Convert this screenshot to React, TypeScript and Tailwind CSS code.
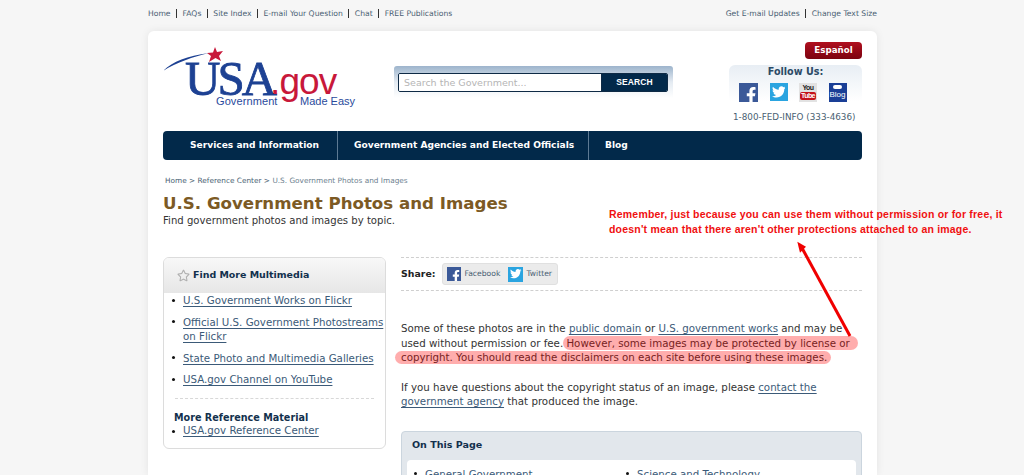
import React from "react";
import { FaFacebookF, FaTwitter, FaRegStar } from "react-icons/fa";

const V = "font-['DejaVu_Sans',Verdana,sans-serif]";
const linkCls = "text-[#3b5a78] underline underline-offset-2";

function Sep() {
  return <span className="w-px h-[9px] bg-[#333] mx-[5.5px]" />;
}

function Dot() {
  return (
    <span className="w-[11px] h-[14.5px] shrink-0 flex items-center">
      <span className="w-[3px] h-[3px] rounded-full bg-[#111]" />
    </span>
  );
}

function Logo() {
  return (
    <div className="relative w-[200px] h-[62px] shrink-0 overflow-visible">
      <svg className="absolute left-0 -top-[2px]" width="200" height="40" viewBox="0 0 200 40">
        <path d="M0 24 C10 14 24 9 46 6 C30 10 14 15 0 24Z" fill="#1d4193" />
        <polygon points="52,0 54,5 60,4 56,9 58,14 52.5,11 46,15 48,9 44,6 50,5.5" fill="#c8183a" />
      </svg>
      <span className="absolute left-[22px] top-[0px] font-['Liberation_Serif',serif] text-[49px] leading-[60px] tracking-[-3px] text-[#1d4193] [-webkit-text-stroke:0.8px_#1d4193]">USA</span>
      <span className="absolute left-[107px] top-[11px] font-['Liberation_Sans',sans-serif] text-[37px] leading-[44px] tracking-[-0.9px] text-[#c8183a]">.gov</span>
      <span className="absolute left-[53px] top-[46px] font-['Liberation_Sans',sans-serif] text-[11px] leading-[13px] tracking-[0.1px] text-[#2a4a9c]">Government</span>
      <span className="absolute left-[137px] top-[46px] font-['Liberation_Sans',sans-serif] text-[11px] leading-[13px] text-[#2a4a9c]">Made Easy</span>
    </div>
  );
}

function FbIcon({ s }: { s: number }) {
  return (
    <span className="flex items-end justify-end overflow-hidden bg-[#3b5998] text-white shrink-0" style={{ width: s, height: s }}>
      <FaFacebookF size={s * 0.86} className="-mr-[1px] -mb-[1px]" />
    </span>
  );
}
function TwIcon({ s }: { s: number }) {
  return (
    <span className="flex items-center justify-center bg-[#2aa4e0] text-white shrink-0" style={{ width: s, height: s }}>
      <FaTwitter size={s * 0.76} />
    </span>
  );
}

export default function App() {
  return (
    <div className={`${V} h-[475px] w-[1024px] overflow-hidden bg-[#f6f6f6] text-[#333]`}>
      <div className="w-[729px] ml-[148px] relative">
        {/* utility bar */}
        <div className="h-[31px] flex items-center justify-between pb-[3px] text-[7.65px] text-[#4a5f73]">
          <div className="flex items-center">
            <span>Home</span><Sep /><span>FAQs</span><Sep /><span>Site Index</span><Sep />
            <span>E-mail Your Question</span><Sep /><span>Chat</span><Sep /><span>FREE Publications</span>
          </div>
          <div className="flex items-center">
            <span>Get E-mail Updates</span><Sep /><span>Change Text Size</span>
          </div>
        </div>

        {/* card */}
        <div className="bg-white rounded-t-[6px] shadow-[0_0_8px_rgba(0,0,0,0.08)] px-[15px] h-[444px] overflow-hidden">
          {/* header */}
          <div className="flex h-[100px]">
            <div className="pt-[18px] w-[231px]"><Logo /></div>
            <div className="pt-[35px]">
              <div className="w-[279px] h-[32px] rounded-t-[3px] bg-gradient-to-b from-[#9db4cc] via-[#e4ebf2] to-white px-[4px] pt-[7px]">
                <div className="flex h-[19px] w-[270px] rounded-[2px] overflow-hidden border border-[#0e2a45]">
                  <div className="flex-1 bg-white text-[9.5px] leading-[17px] pl-[5px] text-[#b5b5b5] border-r border-[#0e2a45]">Search the Government...</div>
                  <div className="w-[65px] bg-[#02294a] text-white text-[8.5px] font-bold leading-[17px] text-center font-['Liberation_Sans',sans-serif] tracking-[0.1px]">SEARCH</div>
                </div>
              </div>
            </div>
            <div className="ml-auto flex flex-col items-end pt-[11px] w-[133px]">
              <div className="w-[57px] h-[17px] rounded-[4px] bg-gradient-to-b from-[#b0101f] to-[#7c0310] text-white text-[8.7px] font-bold leading-[16px] text-center">Español</div>
              <div className="w-[133px] h-[36px] mt-[6px] rounded-t-[6px] bg-gradient-to-b from-[#e8eef4] to-white text-center text-[9.6px] font-bold text-[#2b4a66] leading-[14px]">Follow Us:</div>
              <div className="w-[133px] -mt-[18px] h-[19px] flex pl-[10px] gap-[11.5px]">
                <FbIcon s={19} />
                <TwIcon s={18} />
                <span className="w-[18px] h-[19px] bg-[#e2e2e2] flex flex-col items-center pt-[1px] text-[7px] leading-[8px] font-bold font-['Liberation_Sans',sans-serif]">
                  <span className="text-[#222] tracking-[-0.6px]">You</span>
                  <span className="bg-[#c4141c] text-white rounded-[2px] px-[1px] tracking-[-0.6px] leading-[8px]">Tube</span>
                </span>
                <span className="w-[18px] h-[19px] bg-[#1a3f96] flex flex-col items-center pt-[2px] text-white">
                  <span className="w-[9px] h-[4px] rounded-full bg-white" />
                  <span className="text-[8px] leading-[10px] mt-[1px] font-['Liberation_Sans',sans-serif]">Blog</span>
                </span>
              </div>
              <div className="w-[133px] text-left text-[8.8px] text-[#4a5f73] mt-[9px] leading-[12px] pl-[4px] whitespace-nowrap">1-800-FED-INFO (333-4636)</div>
            </div>
          </div>

          {/* nav */}
          <div className="h-[29px] rounded-[4px] bg-[#02294a] flex items-center text-white font-bold text-[9.1px] mb-[14px]">
            <div className="w-[175px] h-full flex items-center pl-[27px] border-r border-[#5d7a94]">Services and Information</div>
            <div className="w-[251px] h-full flex items-center pl-[16px] border-r border-[#5d7a94] whitespace-nowrap">Government Agencies and Elected Officials</div>
            <div className="pl-[16px]">Blog</div>
          </div>

          {/* breadcrumb */}
          <div className="text-[7.35px] leading-[11px] pl-[2px] pt-[1px] text-[#4a5f73]">
            Home &gt; Reference Center &gt; <span className="text-[#6d7f8f]">U.S. Government Photos and Images</span>
          </div>

          {/* title */}
          <h1 className="text-[16.65px] font-bold leading-[21px] text-[#7c5a24] mt-[7px]">U.S. Government Photos and Images</h1>
          <p className="text-[10.1px] leading-[13px] text-[#333]">Find government photos and images by topic.</p>

          {/* columns */}
          <div className="flex gap-[15px] mt-[30px]">
            <aside className="w-[223px] h-[192px] shrink-0 rounded-[6px] border border-[#dcdcdc] overflow-hidden">
              <div className="h-[35px] bg-gradient-to-b from-[#f8f8f8] to-[#e6e6e6] flex items-center pl-[13px] gap-[3px] text-[9.45px] font-bold text-[#12304d]">
                <FaRegStar size={13} className="text-[#b0b0b0]" />
                <span>Find More Multimedia</span>
              </div>
              <ul className="text-[10.25px] leading-[14.5px] pl-[8px] text-[#3b5a78] flex flex-col gap-[7px]">
                {["U.S. Government Works on Flickr", "Official U.S. Government Photostreams on Flickr", "State Photo and Multimedia Galleries", "USA.gov Channel on YouTube"].map((t) => (
                  <li key={t} className="flex">
                    <Dot />
                    <span className={linkCls}>{t}</span>
                  </li>
                ))}
              </ul>
              <div className="mx-[11px] mt-[11.5px] border-t border-dashed border-[#d8d8d8]" />
              <div className="pl-[10px] mt-[12px] text-[9.65px] font-bold leading-[13px] text-[#12304d]">More Reference Material</div>
              <div className="flex pl-[8px] text-[10.25px] leading-[13px]">
                <Dot />
                <span className={linkCls}>USA.gov Reference Center</span>
              </div>
            </aside>

            <main className="flex-1 min-w-0">
              <div className="h-[34px] border-y border-dashed border-[#cfcfcf] flex items-center">
                <span className="font-bold text-[9.4px] text-[#222]">Share:</span>
                <div className="ml-[7px] h-[22px] w-[116px] rounded-[3px] bg-[#ebebeb] border border-[#e0e0e0] flex items-center pl-[4px] text-[7.65px] text-[#4a5f73]">
                  <FbIcon s={14} />
                  <span className="ml-[3px]">Facebook</span>
                  <span className="ml-[8px]"><TwIcon s={15} /></span>
                  <span className="ml-[3px]">Twitter</span>
                </div>
              </div>

              <div className="relative text-[10.25px] leading-[14.5px] text-[#333] mt-[30px]">
                <span className="absolute left-[162px] top-[15px] w-[295px] h-[14px] rounded-[7px] bg-[rgba(255,0,0,0.32)]" />
                <span className="absolute -left-[6px] top-[30px] w-[436px] h-[13px] rounded-[7px] bg-[rgba(255,0,0,0.32)]" />
                <p className="whitespace-nowrap">Some of these photos are in the <span className={linkCls}>public domain</span> or <span className={linkCls}>U.S. government works</span> and may be</p>
                <p className="whitespace-nowrap">used without permission or fee. However, some images may be protected by license or</p>
                <p className="whitespace-nowrap">copyright. You should read the disclaimers on each site before using these images.</p>
                <p className="whitespace-nowrap mt-[15px]">If you have questions about the copyright status of an image, please <span className={linkCls}>contact the</span></p>
                <p className="whitespace-nowrap"><span className={linkCls}>government agency</span> that produced the image.</p>
              </div>

              <div className="mt-[22px] h-[60px] rounded-t-[4px] border border-[#cbd5de] bg-[#e2e7ec] px-[5px]">
                <div className="h-[28px] flex items-center pl-[5px] text-[9.56px] font-bold text-[#12304d]">On This Page</div>
                <div className="h-[40px] bg-white rounded-t-[4px] pt-[7px] pl-[7px] flex text-[10.25px] leading-[14px]">
                  <div className="w-[212px] flex"><span className="w-[11px] h-[14px] flex items-center"><span className="w-[3px] h-[3px] rounded-full bg-[#111]" /></span><span className={linkCls}>General Government</span></div>
                  <div className="flex"><span className="w-[11px] h-[14px] flex items-center"><span className="w-[3px] h-[3px] rounded-full bg-[#111]" /></span><span className={linkCls}>Science and Technology</span></div>
                </div>
              </div>
            </main>
          </div>
        </div>

        {/* annotation overlay */}
        <div className="absolute left-[461px] top-[207px] whitespace-nowrap font-['Liberation_Sans',sans-serif] font-bold text-[10.5px] leading-[14.5px] tracking-[0.2px] text-[#f01010]">
          <div>Remember, just because you can use them without permission or for free, it</div>
          <div>doesn't mean that there aren't other protections attached to an image.</div>
        </div>
        <svg className="absolute left-[640px] top-[235px]" width="70" height="110" viewBox="0 0 70 110">
          <line x1="62" y1="101" x2="14" y2="13" stroke="#f00000" strokeWidth="3" />
          <polygon points="9.3,6.7 18,11.7 12,17.7" fill="#f00000" />
        </svg>
      </div>
    </div>
  );
}
